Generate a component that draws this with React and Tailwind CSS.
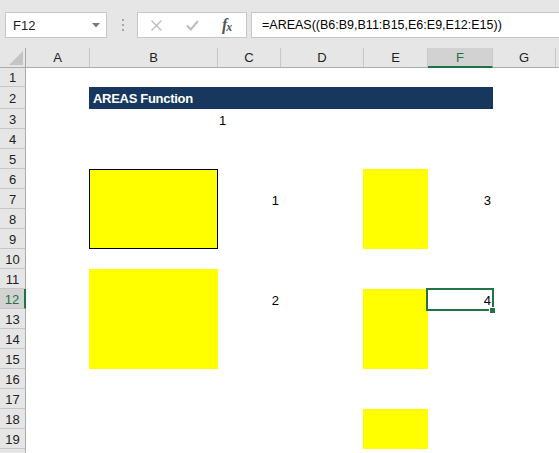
import React from "react";

const colHeaders = [
  { l: "A", w: "w-[64px]" },
  { l: "B", w: "w-[128px]" },
  { l: "C", w: "w-[63px]" },
  { l: "D", w: "w-[83px]" },
  { l: "E", w: "w-[64px]" },
  { l: "F", w: "w-[65px]", sel: true },
  { l: "G", w: "w-[63px]" },
  { l: "", w: "flex-1" },
];

const rowHeaders = Array.from({ length: 20 }, (_, i) => {
  const n = i + 1;
  return {
    n,
    h: n === 1 ? "h-[19px]" : n === 2 ? "h-[22px]" : "h-5",
    sel: n === 12,
  };
});

function Num({ children, className = "" }) {
  return (
    <div className={`flex items-end justify-end pr-[2px] leading-4 text-[13px] text-black ${className}`}>
      {children}
    </div>
  );
}

export default function App() {
  return (
    <div
      className="w-[559px] h-[453px] overflow-hidden bg-white flex flex-col"
      style={{ fontFamily: '"Liberation Sans", Arial, sans-serif' }}
    >
      {/* Formula bar */}
      <div className="h-[48px] shrink-0 bg-[#e6e6e6] flex items-start pt-[12px]">
        <div className="ml-[5px] w-[102px] h-[26px] bg-white border border-[#c6c6c6] flex items-center justify-between pl-[7px] pr-[6px]">
          <span className="text-[13px] text-[#222] leading-none">F12</span>
          <svg width="8" height="5" viewBox="0 0 8 5">
            <path d="M0 0H8L4 4.5Z" fill="#7a7a7a" />
          </svg>
        </div>
        <div className="ml-[15px] h-[26px] flex flex-col justify-center gap-[3px]">
          <div className="w-[2px] h-[2px] bg-[#a6a6a6]" />
          <div className="w-[2px] h-[2px] bg-[#a6a6a6]" />
          <div className="w-[2px] h-[2px] bg-[#a6a6a6]" />
        </div>
        <div className="ml-[13px] w-[110px] h-[26px] bg-white border border-[#c6c6c6] flex items-center">
          <svg className="ml-[12px]" width="13" height="13" viewBox="0 0 13 13">
            <path d="M1.5 1.5L11.5 11.5M11.5 1.5L1.5 11.5" stroke="#bdbdbd" strokeWidth="1.4" fill="none" />
          </svg>
          <svg className="ml-[23px]" width="13" height="11" viewBox="0 0 13 11">
            <path d="M1 5.5L4.8 9.5L12 1" stroke="#bdbdbd" strokeWidth="2" fill="none" />
          </svg>
          <span
            className="ml-[23px] italic text-[#555] leading-none flex items-end"
            style={{ fontFamily: '"Liberation Serif", "Times New Roman", serif' }}
          >
            <span className="text-[16px] font-bold">f</span>
            <span className="text-[12px] font-bold -ml-[1px]">x</span>
          </span>
        </div>
        <div className="ml-[4px] flex-1 h-[26px] bg-white border border-r-0 border-[#c6c6c6] flex items-center pl-[10px]">
          <span className="text-[12.5px] text-black leading-none whitespace-nowrap">
            =AREAS((B6:B9,B11:B15,E6:E9,E12:E15))
          </span>
        </div>
      </div>

      {/* Column headers */}
      <div className="h-5 shrink-0 flex bg-[#e6e6e6] border-b border-[#ababab]">
        <div className="w-[26px] shrink-0 border-r border-[#ababab] flex items-end justify-end pr-[2px] pb-[2px]">
          <svg width="14" height="14" viewBox="0 0 14 14">
            <path d="M14 0V14H0Z" fill="#c4c4c4" />
          </svg>
        </div>
        {colHeaders.map((c, i) => (
          <div
            key={i}
            className={`${c.w} shrink-0 flex items-center justify-center text-[13px] leading-none ${
              c.sel
                ? "bg-[#d2d2d2] border-b-2 border-[#217346] text-[#217346] -mb-px"
                : "text-[#222]"
            } ${c.l ? "border-r border-r-[#c6c6c6]" : ""}`}
          >
            {c.l}
          </div>
        ))}
      </div>

      {/* Body */}
      <div className="flex flex-1 min-h-0">
        <div className="w-[26px] shrink-0 flex flex-col">
          {rowHeaders.map((r) => (
            <div
              key={r.n}
              className={`${r.h} shrink-0 flex items-center justify-center pt-[1px] text-[13px] leading-none border-b border-[#c6c6c6] ${
                r.sel
                  ? "bg-[#d2d2d2] border-r-2 border-r-[#217346] text-[#217346]"
                  : "bg-[#e6e6e6] border-r border-r-[#ababab] text-[#222]"
              }`}
            >
              {r.n}
            </div>
          ))}
        </div>

        <div className="flex-1 grid grid-cols-[64px_128px_63px_83px_64px_65px_63px_1fr] grid-rows-[19px_22px_repeat(18,20px)] content-start">
          {/* B2:F2 title */}
          <div className="col-start-2 col-span-5 row-start-2 bg-[#17375e] -ml-px flex items-end pl-[4px] pb-[2px]">
            <span className="text-white font-bold text-[13px] leading-4 tracking-[-0.3px]">
              AREAS Function
            </span>
          </div>

          {/* C3 */}
          <div className="col-start-3 row-start-3 flex items-end pl-[1px] leading-4 text-[13px] text-black">
            1
          </div>

          {/* B6:B9 */}
          <div className="col-start-2 row-start-6 row-span-4 -ml-px bg-[#ffff00] border border-black" />
          <Num className="col-start-3 row-start-7">1</Num>

          {/* B11:B15 */}
          <div className="col-start-2 row-start-11 row-span-5 -ml-px bg-[#ffff00]" />
          <Num className="col-start-3 row-start-12">2</Num>

          {/* E6:E9 */}
          <div className="col-start-5 row-start-6 row-span-4 -ml-px bg-[#ffff00]" />
          <Num className="col-start-6 row-start-7">3</Num>

          {/* E12:E15 */}
          <div className="col-start-5 row-start-12 row-span-4 -ml-px bg-[#ffff00]" />
          <div className="col-start-6 row-start-12 relative flex items-end justify-end pr-[2px] leading-4 text-[13px] text-black">
            4
            <div className="absolute -left-[2px] -top-[1px] -right-[1px] -bottom-[2px] border-2 border-[#217346]" />
            <div className="absolute -right-[3px] -bottom-[5px] w-[7px] h-[7px] bg-[#217346] border border-white" />
          </div>

          {/* E18:E19 */}
          <div className="col-start-5 row-start-18 row-span-2 -ml-px bg-[#ffff00]" />
        </div>
      </div>
    </div>
  );
}
